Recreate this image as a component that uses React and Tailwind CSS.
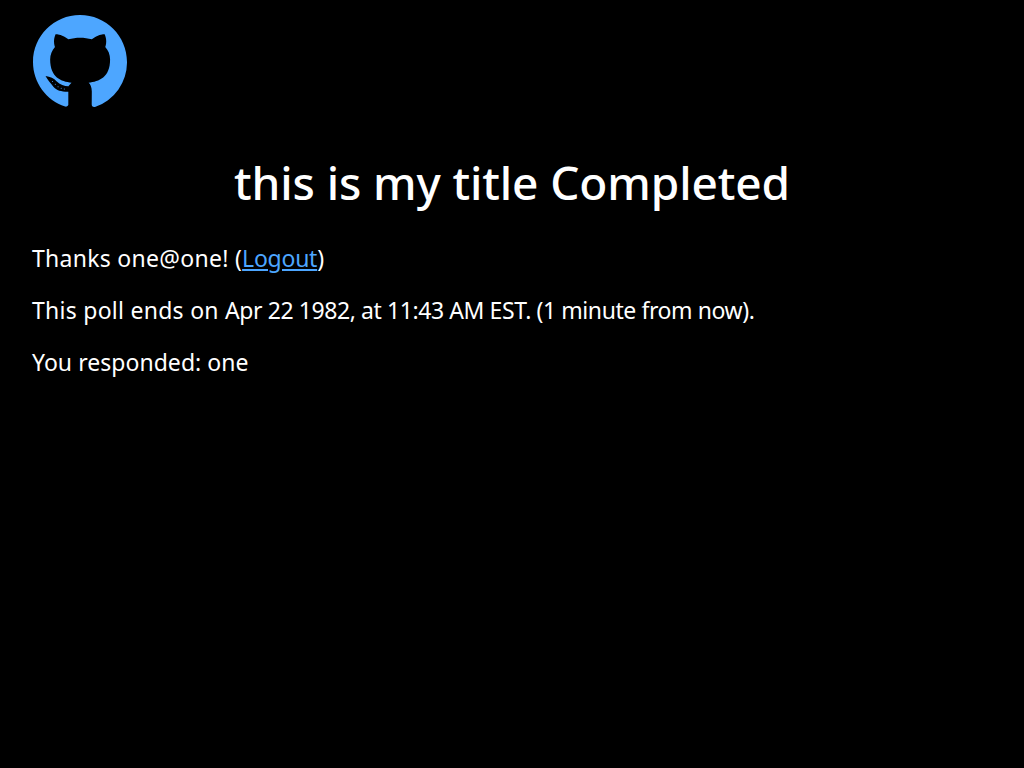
export default function App() {
  return (
    <div className="min-h-screen bg-black text-white px-8 pt-[15px] font-['Noto_Sans','Open_Sans',sans-serif]">
      <a href="#" className="block w-[94px] h-[94px] ml-px">
        <svg viewBox="0 0 24 24" className="w-[94px] h-[94px] fill-[#4da6ff]">
          <path d="M12 0C5.37 0 0 5.37 0 12c0 5.31 3.435 9.795 8.205 11.385.6.105.825-.255.825-.57 0-.285-.015-1.23-.015-3.25C7.4 19.6 6 19.3 5.2 18.3 4.5 17.4 3.7 16.6 3.2 15.6 4.4 15.7 5.4 16.3 6 16.9 6.9 17.8 8 18.2 9.075 18.2 9.18 18.02 9.495 17.595 9.84 17.295c-2.67-.3-5.46-1.335-5.46-5.925 0-1.305.465-2.385 1.23-3.225-.12-.3-.54-1.53.12-3.18 0 0 1.005-.315 3.3 1.23.96-.27 1.98-.405 3-.405s2.04.135 3 .405c2.295-1.56 3.3-1.23 3.3-1.23.66 1.65.24 2.88.12 3.18.765.84 1.23 1.905 1.23 3.225 0 4.605-2.805 5.625-5.475 5.925.435.375.81 1.095.81 2.22 0 1.605-.015 2.895-.015 3.405 0 .315.225.69.825.57A12.02 12.02 0 0024 12c0-6.63-5.37-12-12-12z" />
          <circle cx="5" cy="17" r=".13" />
          <circle cx="5.7" cy="17.7" r=".13" />
          <circle cx="6.4" cy="18.3" r=".13" />
          <circle cx="7.2" cy="18.7" r=".13" />
          <circle cx="8" cy="18.9" r=".13" />
        </svg>
      </a>
      <h1 className="mt-[41px] text-center text-[46px] leading-[64px] font-medium tracking-[-0.12px]">this is my title Completed</h1>
      <div className="mt-[30px] flex flex-col gap-[24px] text-[23px] leading-[28px]">
        <p className="tracking-[0.28px]">
          Thanks one@one! (<a href="#" className="text-[#4da6ff] underline tracking-[-0.25px]">Logout</a>)
        </p>
        <p className="tracking-[-0.415px]">
          <span className="tracking-[0.265px]">This poll ends on </span>
          Apr 22 1982, at 11:43 AM EST. (1 minute from now).
        </p>
        <p className="tracking-[0.04px]">You responded: one</p>
      </div>
    </div>
  );
}
